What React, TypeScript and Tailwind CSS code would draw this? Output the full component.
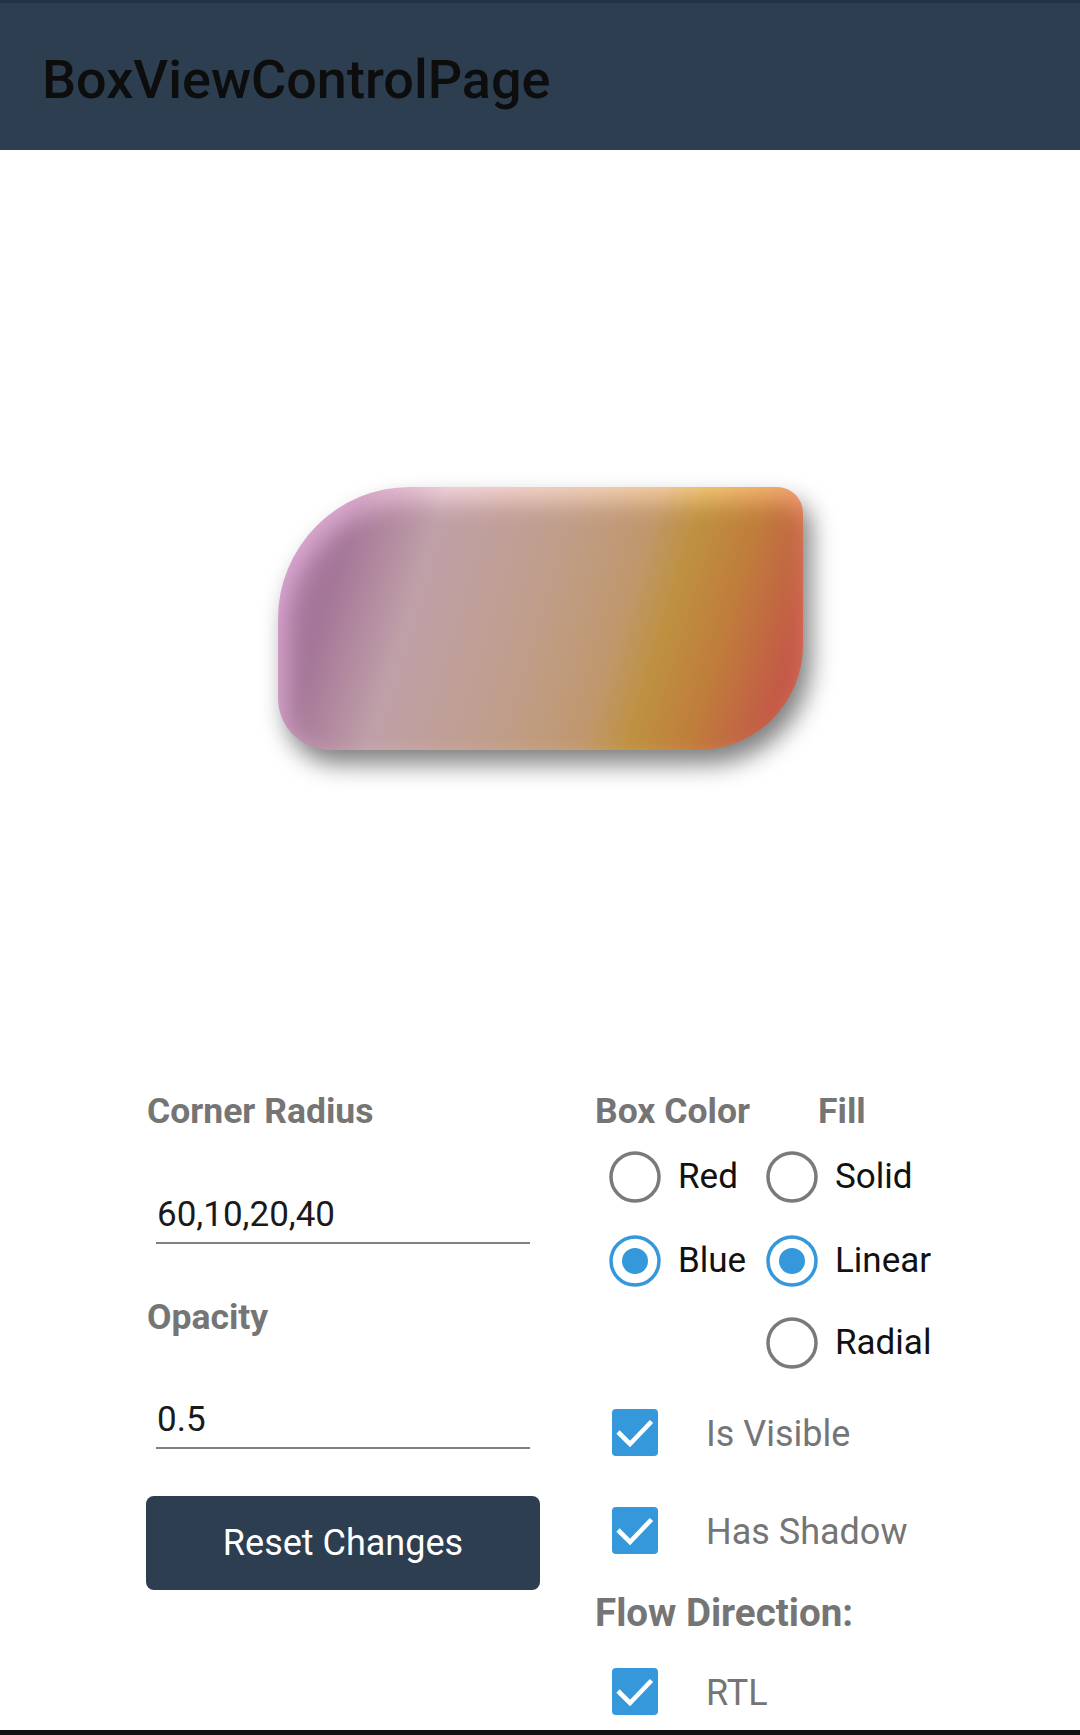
import React from "react";

const gray = "text-[#757575]";

function SectionLabel({ children, className = "" }: { children: React.ReactNode; className?: string }) {
  return <div className={`text-[35.5px] leading-[40px] font-bold ${gray} ${className}`}>{children}</div>;
}

function Entry({ value, className = "" }: { value: string; className?: string }) {
  return (
    <div className={`ml-[10px] w-[374px] border-b-2 border-[#808080] pb-[7px] ${className}`}>
      <div className="pl-[1px] text-[35px] leading-[40px] text-[#1a1a1a]">{value}</div>
    </div>
  );
}

function Radio({ label, checked = false }: { label: string; checked?: boolean }) {
  const ring = checked ? "#3498db" : "#7a7a7a";
  return (
    <div className="flex items-center gap-[17px]">
      <svg width="52" height="52" viewBox="0 0 52 52" className="shrink-0">
        <circle cx="26" cy="26" r="24" fill="none" stroke={ring} strokeWidth="3.5" />
        {checked && <circle cx="26" cy="26" r="13" fill="#3498db" />}
      </svg>
      <span className="text-[35px] leading-[40px] text-[#111]">{label}</span>
    </div>
  );
}

function Check({ label, className = "" }: { label: string; className?: string }) {
  return (
    <div className={`flex items-center pl-[17px] ${className}`}>
      <svg width="46" height="47" viewBox="0 0 46 47" className="shrink-0">
        <rect x="0" y="0" width="46" height="47" rx="4" fill="#3498db" />
        <polyline points="6,23 18,35 39.5,12.5" fill="none" stroke="#fff" strokeWidth="4.6" />
      </svg>
      <span className={`ml-[48px] pt-[4px] text-[36px] leading-[40px] ${gray}`}>{label}</span>
    </div>
  );
}

function GradientBox() {
  return (
    <div className="relative h-[263px] w-[525px]">
      <div className="absolute inset-0 translate-x-[8px] translate-y-[14px] rounded-[132px_26px_105px_52px] bg-black/50 blur-[12px]" />
      <div className="relative h-full w-full rounded-[132px_26px_105px_52px] bg-[linear-gradient(107deg,rgba(195,105,185,0.6)_0%,rgba(190,112,168,0.6)_14%,rgba(235,182,195,0.6)_28%,rgba(235,178,148,0.6)_48%,rgba(235,168,98,0.6)_63%,rgba(232,157,23,0.6)_71%,rgba(235,123,15,0.6)_81%,rgba(240,65,32,0.6)_93%,rgba(240,60,35,0.6)_100%)]" />
    </div>
  );
}

export default function App() {
  return (
    <div className="flex h-[1735px] w-[1080px] flex-col overflow-hidden bg-white font-[Roboto,sans-serif]">
      <header className="flex h-[150px] shrink-0 items-center border-t-[3px] border-[#1f3449] bg-[#2d3e50] pl-[42px] pt-[6px]">
        <h1 className="text-[54px] leading-[60px] font-medium text-[#0d0d0d]">BoxViewControlPage</h1>
      </header>

      <main className="flex h-[936px] shrink-0 items-center justify-center">
        <GradientBox />
      </main>

      <section className="flex h-[644px] shrink-0 pl-[146px]">
        <div className="flex w-[394px] flex-col">
          <SectionLabel className="mt-[5px] pl-[1px]">Corner Radius</SectionLabel>
          <Entry value="60,10,20,40" className="mt-[64px]" />
          <SectionLabel className="mt-[53px] pl-[1px]">Opacity</SectionLabel>
          <Entry value="0.5" className="mt-[63px]" />
          <button className="mt-[47px] h-[94px] w-[394px] rounded-[8px] bg-[#2c3e50] text-[36px] text-white">
            Reset Changes
          </button>
        </div>

        <div className="ml-[55px] flex flex-col">
          <div className="mt-[5px] flex">
            <SectionLabel className="w-[223px]">Box Color</SectionLabel>
            <SectionLabel>Fill</SectionLabel>
          </div>
          <div className="mt-[4px] grid grid-cols-[157px_auto] grid-rows-[84px_84px_80px] pl-[14px]">
            <div className="flex items-center"><Radio label="Red" /></div>
            <div className="flex items-center"><Radio label="Solid" /></div>
            <div className="flex items-center"><Radio label="Blue" checked /></div>
            <div className="flex items-center"><Radio label="Linear" checked /></div>
            <div />
            <div className="flex items-center"><Radio label="Radial" /></div>
          </div>
          <Check label="Is Visible" className="h-[98px]" />
          <Check label="Has Shadow" className="h-[98px]" />
          <div className={`mt-[12px] text-[38.5px] leading-[44px] font-bold ${gray}`}>Flow Direction:</div>
          <Check label="RTL" className="mt-[17px] h-[78px]" />
        </div>
      </section>

      <div className="h-[5px] shrink-0 bg-[#111]" />
    </div>
  );
}
